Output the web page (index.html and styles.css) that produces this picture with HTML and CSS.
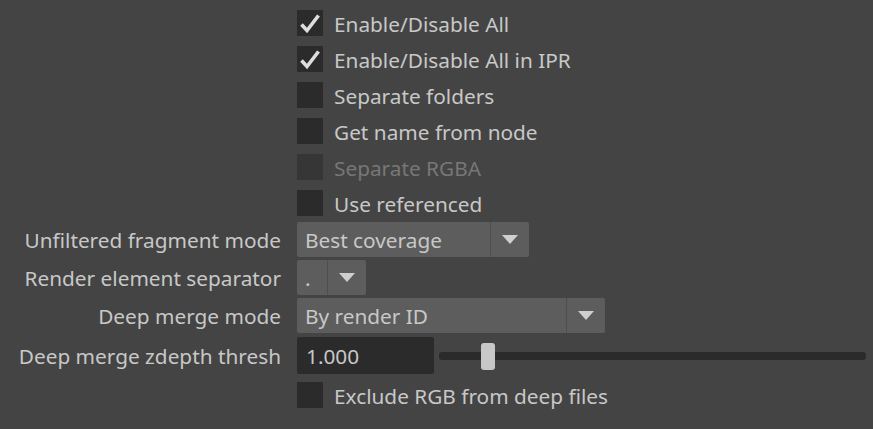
FILE: index.html
```html
<!DOCTYPE html>
<html lang="en">
<head>
    <meta charset="UTF-8">
    <title>Render Elements Settings</title>
    <link rel="stylesheet" href="styles.css">
</head>
<body>
    <div class="panel">
        <div class="row check-row">
            <span class="label"></span>
            <label class="check">
                <span class="box checked">
                    <svg viewBox="0 0 26 26" width="26" height="26"><polyline points="4.5,14.5 10,20.5 21.5,5.5" /></svg>
                </span>
                <span class="check-text">Enable/Disable All</span>
            </label>
        </div>
        <div class="row check-row">
            <span class="label"></span>
            <label class="check">
                <span class="box checked">
                    <svg viewBox="0 0 26 26" width="26" height="26"><polyline points="4.5,14.5 10,20.5 21.5,5.5" /></svg>
                </span>
                <span class="check-text">Enable/Disable All in IPR</span>
            </label>
        </div>
        <div class="row check-row">
            <span class="label"></span>
            <label class="check"><span class="box"></span><span class="check-text">Separate folders</span></label>
        </div>
        <div class="row check-row">
            <span class="label"></span>
            <label class="check"><span class="box"></span><span class="check-text">Get name from node</span></label>
        </div>
        <div class="row check-row">
            <span class="label"></span>
            <label class="check disabled"><span class="box"></span><span class="check-text">Separate RGBA</span></label>
        </div>
        <div class="row check-row">
            <span class="label"></span>
            <label class="check"><span class="box"></span><span class="check-text">Use referenced</span></label>
        </div>

        <div class="row combo-row first-combo">
            <span class="label">Unfiltered fragment mode</span>
            <div class="combo combo-fragment">
                <span class="combo-value">Best coverage</span>
                <span class="combo-arrow"><svg viewBox="0 0 16 9" width="16" height="9"><polygon points="0,0 16,0 8,9" /></svg></span>
            </div>
        </div>
        <div class="row combo-row">
            <span class="label">Render element separator</span>
            <div class="combo combo-separator">
                <span class="combo-value">.</span>
                <span class="combo-arrow"><svg viewBox="0 0 16 9" width="16" height="9"><polygon points="0,0 16,0 8,9" /></svg></span>
            </div>
        </div>
        <div class="row combo-row">
            <span class="label">Deep merge mode</span>
            <div class="combo combo-merge">
                <span class="combo-value">By render ID</span>
                <span class="combo-arrow"><svg viewBox="0 0 16 9" width="16" height="9"><polygon points="0,0 16,0 8,9" /></svg></span>
            </div>
        </div>
        <div class="row slider-row">
            <span class="label">Deep merge zdepth thresh</span>
            <div class="slider-group">
                <div class="field">1.000</div>
                <div class="track">
                    <span class="thumb"></span>
                </div>
            </div>
        </div>
        <div class="row check-row last-check">
            <span class="label"></span>
            <label class="check"><span class="box"></span><span class="check-text">Exclude RGB from deep files</span></label>
        </div>
    </div>
</body>
</html>
```

FILE: styles.css
```css
body {
    margin: 0;
    padding: 0;
    background-color: #444444;
    font-family: "Noto Sans", "Open Sans", sans-serif;
    font-size: 20.8px;
    color: #c8c8c8;
}

.panel {
    display: flex;
    flex-direction: column;
    padding-top: 10px;
}

.row {
    display: grid;
    grid-template-columns: 281px 1fr;
    column-gap: 16px;
    align-items: center;
}

.label {
    text-align: right;
    white-space: nowrap;
    line-height: 1;
    padding-top: 2px;
}

/* checkboxes */
.check-row {
    height: 26px;
    margin-bottom: 10px;
}

.check {
    display: flex;
    align-items: center;
    gap: 11px;
}

.check-text {
    line-height: 1;
    padding-top: 2px;
    white-space: nowrap;
}

.box {
    width: 26px;
    height: 26px;
    background-color: #2b2b2b;
    display: block;
}

.box svg {
    display: block;
}

.box polyline {
    fill: none;
    stroke: #dedede;
    stroke-width: 3.6;
}

.check.disabled .check-text {
    color: #777777;
}

.check.disabled .box {
    background-color: #363636;
}

/* combo boxes */
.combo-row {
    height: 35px;
    margin-bottom: 3px;
}

.first-combo {
    margin-top: -4px;
}

.combo {
    display: flex;
    height: 35px;
    background-color: #5d5d5d;
    border-radius: 2px;
}

.combo-value {
    flex: 1;
    padding-left: 8px;
    padding-top: 2px;
    line-height: 33px;
    white-space: nowrap;
}

.combo-arrow {
    width: 38px;
    border-left: 1px solid #4e4e4e;
    display: flex;
    align-items: center;
    justify-content: center;
}

.combo-arrow polygon {
    fill: #cfcfcf;
}

.combo-fragment { width: 232px; }
.combo-separator { width: 69px; }
.combo-merge { width: 308px; }

/* slider */
.slider-row {
    height: 37px;
    margin-top: 1px;
    margin-bottom: 8px;
}

.slider-group {
    display: flex;
    align-items: center;
    gap: 5px;
    padding-right: 7px;
}

.field {
    flex-shrink: 0;
    width: 137px;
    height: 37px;
    line-height: 35px;
    padding-top: 2px;
    box-sizing: border-box;
    padding-left: 9px;
    background-color: #2b2b2b;
    border-radius: 2px;
}

.track {
    flex: 1;
    height: 8px;
    background-color: #2b2b2b;
    border-radius: 3px;
    position: relative;
}

.thumb {
    position: absolute;
    left: 42px;
    top: -9px;
    width: 14px;
    height: 27px;
    background-color: #c8c8c8;
    border-radius: 3px;
}
```
